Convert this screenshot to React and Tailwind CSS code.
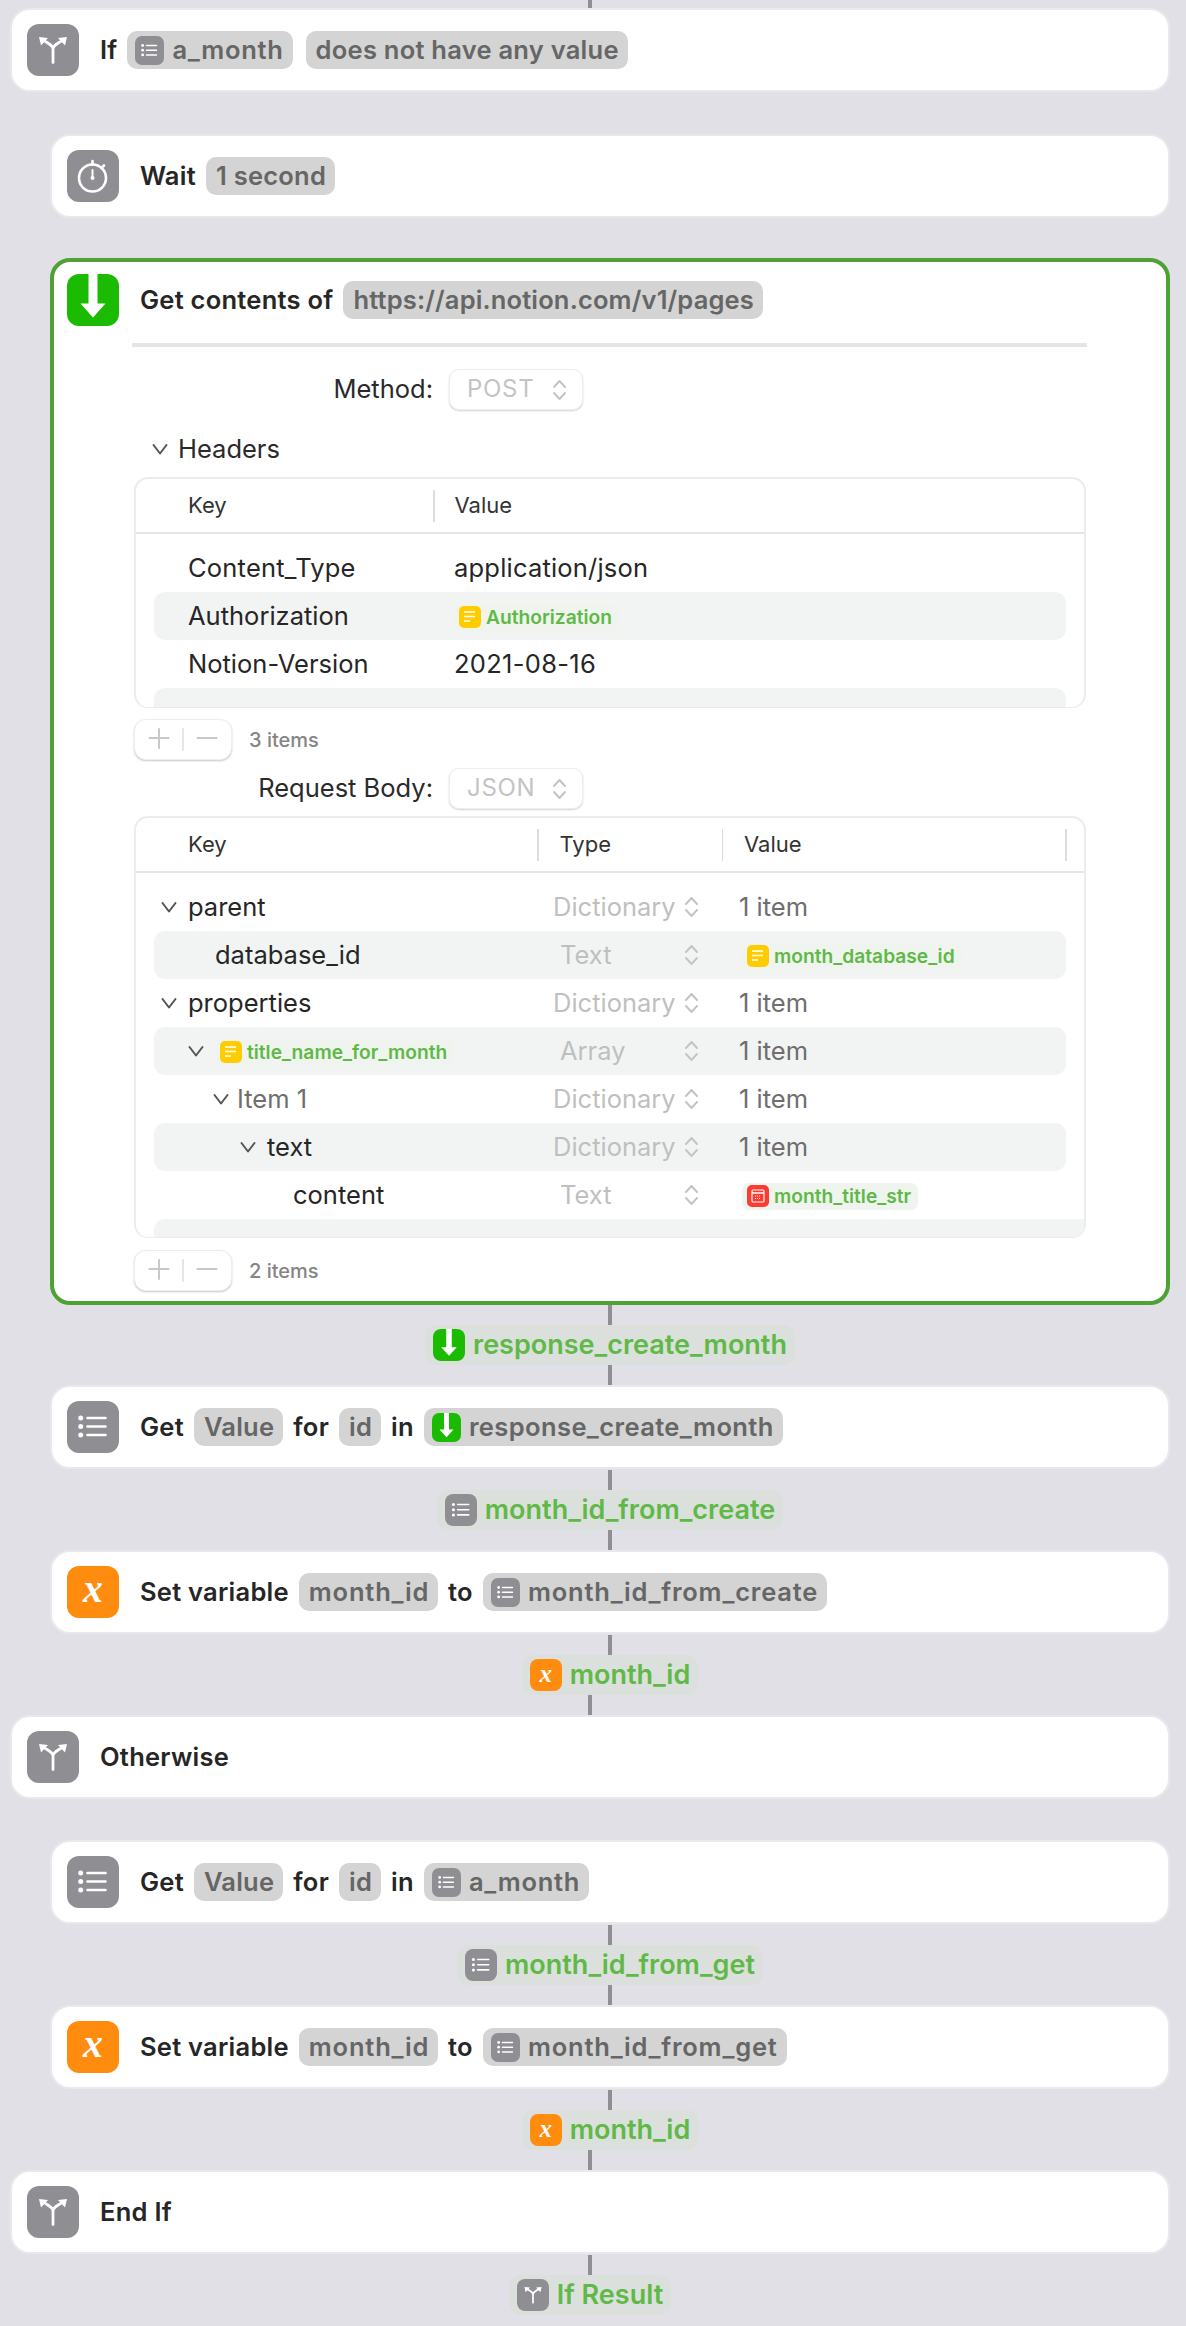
import React from "react";

const Branch = () => (
  <svg viewBox="0 0 52 52" className="w-full h-full" fill="none">
    <path d="M26 38.5V25C26 20.500 20.500 19.500 15.500 15.500M26 25C26 20.500 31.500 19.500 36.500 15.500" stroke="#fff" strokeWidth="2.800" strokeLinecap="round" />
    <path d="M12 13l9 1-7 7.500zM40 13l-9 1 7 7.500z" fill="#fff" />
  </svg>
);
const ListI = () => (
  <svg viewBox="0 0 52 52" className="w-full h-full" fill="none">
    <circle cx="13.700" cy="17" r="2.500" fill="#fff" />
    <circle cx="13.700" cy="25.500" r="2.500" fill="#fff" />
    <circle cx="13.700" cy="34" r="2.500" fill="#fff" />
    <path d="M20.500 17H38.500M20.500 25.500H38.500M20.500 34H38.500" stroke="#fff" strokeWidth="2.600" strokeLinecap="round" />
  </svg>
);
const Watch = () => (
  <svg viewBox="0 0 52 52" className="w-full h-full" fill="none">
    <circle cx="25.500" cy="28" r="13.500" stroke="#fff" strokeWidth="2.600" />
    <path d="M25.500 14V11M37 15.500l-2.500 2.500" stroke="#fff" strokeWidth="2.600" strokeLinecap="round" />
    <path d="M25.500 20V28" stroke="#fff" strokeWidth="2" strokeLinecap="round" />
    <circle cx="25.500" cy="28" r="2" fill="#fff" />
  </svg>
);
const Down = () => (
  <svg viewBox="0 0 52 52" className="w-full h-full">
    <path d="M21.500 0H30.500V29.500H38.500L26 43.500 13.500 29.500H21.500Z" fill="#fff" />
  </svg>
);
const Doc = () => (
  <svg viewBox="0 0 22 22" className="w-full h-full" fill="none">
    <path d="M5 6H16M5 10.500H16M5 15H11" stroke="#fff" strokeWidth="1.500" />
  </svg>
);
const Cal = () => (
  <svg viewBox="0 0 22 22" className="w-full h-full" fill="none">
    <rect x="5" y="5" width="12" height="12" rx="1" stroke="#fff" strokeWidth="1.200" />
    <path d="M5 8H17" stroke="#fff" strokeWidth="1.500" />
    <path d="M8 11H14M8 13.500H14" stroke="#fff" strokeWidth="1.200" strokeDasharray="1 1" />
  </svg>
);

const Box = ({ size, color, children }) => <span className={`${size} ${color} shrink-0 inline-flex items-center justify-center`}>{children}</span>;
const GRAY = "bg-[#8e8e93]";
const BIG = "w-[52px] h-[52px] rounded-[12px]";
const MID = "w-[29px] h-[29px] rounded-[7px]";
const CHP = "w-[32px] h-[32px] rounded-[8px]";

const XBig = () => <Box size={BIG} color="bg-[#ff8c0f]"><span className="font-['Liberation_Serif',serif] italic font-bold text-white text-[40px] leading-[40px] -mt-[7px]">x</span></Box>;
const XChip = () => <Box size={CHP} color="bg-[#ff8c0f]"><span className="font-['Liberation_Serif',serif] italic font-bold text-white text-[25px] leading-[25px] -mt-[4px]">x</span></Box>;

const Pill = ({ icon, track = "", children }) => (
  <span className={`h-[38px] ${icon ? "pl-[8px]" : "pl-[10px]"} pr-[9px] rounded-[10px] bg-[#d4d4d4] text-[#666666] font-semibold inline-flex items-center gap-[8px] shrink-0 ${track}`}>{icon}{children}</span>
);
const W = ({ children }) => <span className="font-semibold text-[#262626] shrink-0">{children}</span>;

const Card = ({ indent, children }) => (
  <div className={`${indent ? "ml-[50px] w-[1120px]" : "ml-[10px] w-[1160px]"} h-[84px] bg-white border-2 border-[#e9e8ec] rounded-[20px] pl-[15px] flex items-center text-[25.500px] tracking-[0.25px]`}>
    {children}
  </div>
);

const Line = () => <div className="w-[4px] h-[20px] bg-[#8e8e93]" />;

const Chip = ({ icon, children }) => (
  <div className="h-[40px] pl-[8px] pr-[8px] rounded-[11px] bg-[#dce0dd] inline-flex items-center gap-[8px] text-[#5fb947] font-semibold text-[27px] tracking-normal">{icon}<span className="mt-[1px]">{children}</span></div>
);

const Conn = ({ icon, label }) => (
  <div className="ml-[50px] w-[1120px] flex flex-col items-center">
    <Line />
    <Chip icon={icon}>{label}</Chip>
    <Line />
  </div>
);

const Stepper = () => (
  <svg viewBox="0 0 15 22" className="w-[15px] h-[22px] shrink-0" fill="none">
    <path d="M2 8L7.500 2 13 8M2 14L7.500 20 13 14" stroke="#c4c4c4" strokeWidth="2" strokeLinecap="round" strokeLinejoin="round" />
  </svg>
);
const Chev = () => (
  <svg viewBox="0 0 16 12" className="w-[16px] h-[12px] shrink-0" fill="none">
    <path d="M1.500 2L8 10.500 14.500 2" stroke="#555555" strokeWidth="2" strokeLinecap="round" strokeLinejoin="round" />
  </svg>
);

const Select = ({ label, value }) => (
  <div className="flex items-center text-[25.500px] text-[#2a2a2a]">
    <div className="w-[299px] text-right">{label}</div>
    <div className="ml-[16px] w-[134px] h-[41px] rounded-[10px] bg-white border border-[#eeeeee] shadow-[0_1px_2px_rgba(0,0,0,0.18)] flex items-center pl-[17px] pr-[15px] justify-between text-[#c4c4c4]">
      <span className="text-[24px] tracking-[0.7px] -mt-[1px]">{value}</span>
      <Stepper />
    </div>
  </div>
);

const Footer = ({ n }) => (
  <div className="flex items-center">
    <div className="w-[98px] h-[41px] rounded-[12px] bg-white border border-[#eeeeee] shadow-[0_1px_2px_rgba(0,0,0,0.22)] flex items-center justify-center">
      <svg viewBox="0 0 98 41" className="w-[98px] h-[41px]" fill="none">
        <path d="M14 19H35M24.500 9V30M63 19H84" stroke="#c8c8c8" strokeWidth="2" />
        <path d="M49 9V32" stroke="#dddddd" strokeWidth="1.500" />
      </svg>
    </div>
    <span className="ml-[17px] text-[20px] font-medium text-[#858585]">{n} items</span>
  </div>
);

const TinyChip = ({ kind = "y", children }) => (
  <span className="h-[27px] mt-[2px] pl-[5px] pr-[7px] rounded-[7px] bg-[#eff5ee] inline-flex items-center gap-[5px] text-[#5fb947] font-semibold text-[19.200px] tracking-normal">
    <Box size="w-[22px] h-[22px] rounded-[5px]" color={kind === "y" ? "bg-[#ffcc00]" : "bg-[#ff3b30]"}>{kind === "y" ? <Doc /> : <Cal />}</Box>
    {children}
  </span>
);

const HeadText = ({ children }) => <span className="text-[22px] text-[#333333]">{children}</span>;
const VDiv = () => <div className="w-[1.500px] h-[32px] bg-[#dddddd] shrink-0" />;

const Row = ({ alt, children }) => (
  <div className={`h-[48px] mx-[18px] rounded-[11px] flex items-center text-[25.500px] text-[#262626] ${alt ? "bg-[#f2f4f3]" : ""}`}>{children}</div>
);

const Table1 = () => (
  <div className="w-[952px] h-[231px] border-2 border-b border-[#ececec] rounded-[14px] overflow-hidden">
    <div className="h-[55px] border-b-2 border-[#e5e5e5] flex items-center">
      <div className="w-[297px] pl-[52px]"><HeadText>Key</HeadText></div>
      <VDiv />
      <div className="pl-[20px]"><HeadText>Value</HeadText></div>
    </div>
    <div className="pt-[10px]">
      <Row><div className="w-[300px] pl-[34px] tracking-[0.2px]">Content_Type</div><div className="tracking-[0.2px]">application/json</div></Row>
      <Row alt><div className="w-[300px] pl-[34px]">Authorization</div><TinyChip>Authorization</TinyChip></Row>
      <Row><div className="w-[300px] pl-[34px]">Notion-Version</div><div className="tracking-[0.3px]">2021-08-16</div></Row>
      <Row alt />
    </div>
  </div>
);

const TRow = ({ alt, keyCell, type, value, chip }) => (
  <Row alt={alt}>
    <div className="w-[399px] shrink-0 flex items-center">{keyCell}</div>
    <div className={`w-[186px] shrink-0 flex items-center justify-between pr-[40px] text-[#bfbfbf] ${type === "Dictionary" ? "" : "pl-[7px]"}`}>
      <span>{type}</span>
      <Stepper />
    </div>
    {chip ? <div className="ml-[3px] flex">{chip}</div> : <div className="text-[#6e6e6e]">{value}</div>}
  </Row>
);

const Table2 = () => (
  <div className="w-[952px] h-[422px] border-2 border-b border-[#ececec] rounded-[14px] overflow-hidden">
    <div className="h-[55px] border-b-2 border-[#e5e5e5] flex items-center">
      <div className="w-[401px] pl-[52px]"><HeadText>Key</HeadText></div>
      <VDiv />
      <div className="w-[183px] pl-[21px]"><HeadText>Type</HeadText></div>
      <VDiv />
      <div className="w-[342px] pl-[21px]"><HeadText>Value</HeadText></div>
      <VDiv />
    </div>
    <div className="pt-[10px]">
      <TRow keyCell={<div className="pl-[7px] flex items-center gap-[11px]"><Chev />parent</div>} type="Dictionary" value="1 item" />
      <TRow alt keyCell={<div className="pl-[61px]">database_id</div>} type="Text" chip={<TinyChip>month_database_id</TinyChip>} />
      <TRow keyCell={<div className="pl-[7px] flex items-center gap-[11px]"><Chev />properties</div>} type="Dictionary" value="1 item" />
      <TRow alt keyCell={<div className="pl-[34px] flex items-center gap-[11px]"><Chev /><TinyChip>title_name_for_month</TinyChip></div>} type="Array" value="1 item" />
      <TRow keyCell={<div className="pl-[59px] flex items-center gap-[8px] text-[#6e6e6e]"><Chev />Item 1</div>} type="Dictionary" value="1 item" />
      <TRow alt keyCell={<div className="pl-[86px] flex items-center gap-[11px]"><Chev />text</div>} type="Dictionary" value="1 item" />
      <TRow keyCell={<div className="pl-[139px]">content</div>} type="Text" chip={<TinyChip kind="r">month_title_str</TinyChip>} />
      <div className="h-[48px] ml-[18px] rounded-tl-[11px] bg-[#f2f4f3]" />
    </div>
  </div>
);

const GetCard = ({ pillIcon, pillText, track }) => (
  <Card indent>
    <Box size={BIG} color={GRAY}><ListI /></Box>
    <div className="ml-[21px] flex items-center gap-[10px]">
      <W>Get</W><Pill>Value</Pill><W>for</W><Pill>id</Pill><W>in</W><Pill icon={pillIcon} track={track}>{pillText}</Pill>
    </div>
  </Card>
);
const SetCard = ({ text }) => (
  <Card indent>
    <XBig />
    <div className="ml-[21px] flex items-center gap-[10px]">
      <W>Set variable</W><Pill track="tracking-[0.8px]">month_id</Pill><W>to</W>
      <Pill track="tracking-[0.8px]" icon={<Box size={MID} color={GRAY}><ListI /></Box>}>{text}</Pill>
    </div>
  </Card>
);
const BranchCard = ({ children }) => (
  <Card>
    <Box size={BIG} color={GRAY}><Branch /></Box>
    <div className="ml-[21px] flex items-center gap-[10px]">{children}</div>
  </Card>
);

const listMid = <Box size={MID} color={GRAY}><ListI /></Box>;
const listChip = <Box size={CHP} color={GRAY}><ListI /></Box>;

export default function App() {
  return (
    <div className="w-[1186px] h-[2326px] bg-[#e1e0e6] overflow-hidden font-['Inter',sans-serif]">
      <div className="ml-[10px] w-[1160px] flex justify-center"><div className="w-[4px] h-[8px] bg-[#8e8e93]" /></div>
      <BranchCard>
        <W>If</W>
        <Pill track="tracking-[0.7px]" icon={listMid}>a_month</Pill>
        <div className="ml-[3px]"><Pill>does not have any value</Pill></div>
      </BranchCard>
      <div className="h-[42px]" />
      <Card indent>
        <Box size={BIG} color={GRAY}><Watch /></Box>
        <div className="ml-[21px] flex items-center gap-[10px]"><W>Wait</W><Pill>1 second</Pill></div>
      </Card>
      <div className="h-[40px]" />
      <div className="ml-[50px] w-[1120px] h-[1047px] bg-white border-4 border-[#4ea233] rounded-[20px]">
        <div className="pl-[13px] pt-[12px] flex items-center text-[25.500px] tracking-[0.25px]">
          <Box size={BIG} color="bg-[#1abb00]"><Down /></Box>
          <div className="ml-[21px] flex items-center gap-[10px]"><W>Get contents of</W><Pill track="tracking-[0.15px]">https://api.notion.com/v1/pages</Pill></div>
        </div>
        <div className="mt-[17px] ml-[78px] w-[955px] h-[4px] bg-[#e5e5e5]" />
        <div className="ml-[80px]">
          <div className="mt-[22px]"><Select label="Method:" value="POST" /></div>
          <div className="mt-[24px] h-[30px] flex items-center text-[25.500px] text-[#2a2a2a] ml-[18px]"><Chev /><span className="ml-[10px]">Headers</span></div>
          <div className="mt-[13px]"><Table1 /></div>
          <div className="mt-[11px]"><Footer n="3" /></div>
          <div className="mt-[8px]"><Select label="Request Body:" value="JSON" /></div>
          <div className="mt-[7px]"><Table2 /></div>
          <div className="mt-[12px]"><Footer n="2" /></div>
        </div>
      </div>
      <Conn icon={<Box size={CHP} color="bg-[#1abb00]"><Down /></Box>} label="response_create_month" />
      <GetCard track="tracking-[0.4px]" pillIcon={<Box size={MID} color="bg-[#1abb00]"><Down /></Box>} pillText="response_create_month" />
      <div className="h-[1px]" />
      <Conn icon={listChip} label="month_id_from_create" />
      <SetCard text="month_id_from_create" />
      <div className="h-[1px]" />
      <div className="ml-[50px] w-[1120px] flex flex-col items-center">
        <Line />
        <Chip icon={<XChip />}>month_id</Chip>
      </div>
      <div className="ml-[10px] w-[1160px] flex justify-center"><Line /></div>
      <BranchCard><W>Otherwise</W></BranchCard>
      <div className="h-[41px]" />
      <GetCard track="tracking-[0.7px]" pillIcon={listMid} pillText="a_month" />
      <div className="h-[1px]" />
      <Conn icon={listChip} label="month_id_from_get" />
      <SetCard text="month_id_from_get" />
      <div className="h-[1px]" />
      <div className="ml-[50px] w-[1120px] flex flex-col items-center">
        <Line />
        <Chip icon={<XChip />}>month_id</Chip>
      </div>
      <div className="ml-[10px] w-[1160px] flex justify-center"><Line /></div>
      <BranchCard><W>End If</W></BranchCard>
      <div className="h-[1px]" />
      <div className="ml-[10px] w-[1160px] flex flex-col items-center">
        <Line />
        <Chip icon={<Box size={CHP} color={GRAY}><Branch /></Box>}>If Result</Chip>
      </div>
    </div>
  );
}
